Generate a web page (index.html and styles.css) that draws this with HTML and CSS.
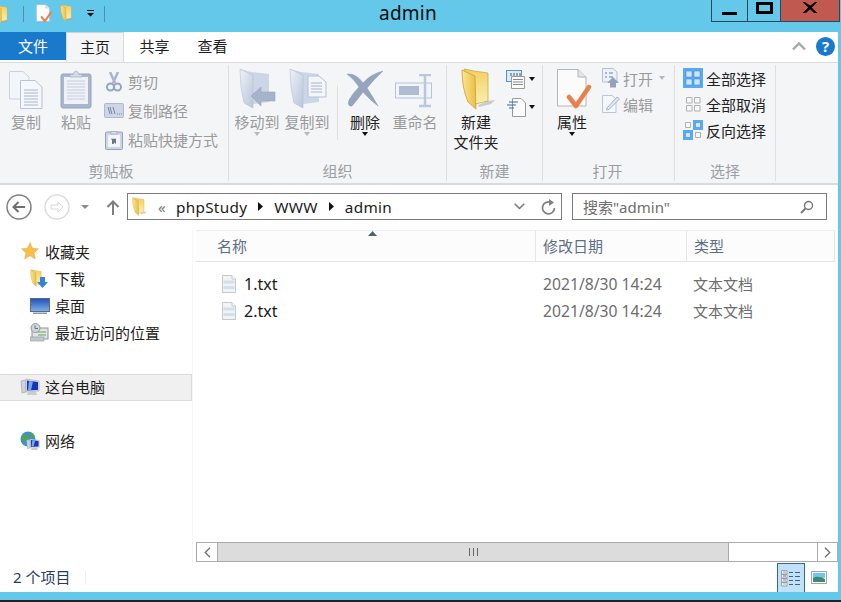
FILE: index.html
```html
<!DOCTYPE html>
<html lang="zh">
<head>
<meta charset="utf-8">
<title>admin</title>
<link rel="stylesheet" href="styles.css">
</head>
<body>
<svg class="defs" width="0" height="0">
  <defs>
    <linearGradient id="gFolder" x1="0" y1="0" x2="1" y2="0">
      <stop offset="0" stop-color="#fbe68f"/><stop offset="1" stop-color="#e9bf45"/>
    </linearGradient>
    <linearGradient id="gBack" x1="0" y1="0" x2="0" y2="1">
      <stop offset="0" stop-color="#f2cf61"/><stop offset="1" stop-color="#fbeeb0"/>
    </linearGradient>
    <linearGradient id="gPale" x1="0" y1="0" x2="1" y2="1">
      <stop offset="0" stop-color="#eef1f7"/><stop offset="1" stop-color="#b9c5da"/>
    </linearGradient>
    <linearGradient id="gScreen" x1="0" y1="0" x2="0" y2="1">
      <stop offset="0" stop-color="#1f52b8"/><stop offset="1" stop-color="#7fb0ea"/>
    </linearGradient>
    <symbol id="folder" viewBox="0 0 36 44">
      <path d="M3 1 L13 3 L27 5 L27 33 L14 36 Z" fill="url(#gBack)" stroke="#d0a93d" stroke-width=".8"/>
      <path d="M1 2 L14 8 L15 41 L7 34 Q1 20 1 2Z" fill="url(#gFolder)" stroke="#c79f34" stroke-width=".8"/>
      <path d="M17 37 L27 33 L34 32 L30 36 L18 39Z" fill="#a8a8a8" opacity=".55"/>
    </symbol>
    <symbol id="paleFolder" viewBox="0 0 40 44">
      <path d="M3 1 L14 4 L32 6 L32 34 L16 36Z" fill="#cdd6e6"/>
      <path d="M3 1 L16 7 L16 40 L7 35 Q3 20 3 1Z" fill="url(#gPale)" stroke="#b5c0d4" stroke-width=".6"/>
    </symbol>
    <symbol id="txt" viewBox="0 0 14 18">
      <path d="M.5.5H10L13.5 4V17.5H.5Z" fill="#f1f3f5" stroke="#c6c9cc"/>
      <path d="M1.5 5.5H12.5V8.5H1.5ZM1.5 11H12.5V14H1.5Z" fill="#d5dfe8"/>
      <path d="M10 .5V4H13.5" fill="#fff" stroke="#c6c9cc"/>
    </symbol>
    <symbol id="pc" viewBox="0 0 20 18">
      <path d="M1 3 L6 2 L6 14 L2 15Z" fill="#cfd3d8" stroke="#9aa0a6" stroke-width=".6"/>
      <path d="M6 1 L19 3 L19 13 L6 14Z" fill="#dfe3e8" stroke="#a5a9ad" stroke-width=".6"/>
      <path d="M7 2.5 L18 4 L18 12 L7 12.5Z" fill="#1536b8"/>
      <path d="M9 3 L13 3.4 L11 12 L8 12Z" fill="#7ba4ee"/>
      <path d="M8 14 L16 14 L17 17 L7 17Z" fill="#c8ccd0"/>
    </symbol>
    <symbol id="check" viewBox="0 0 36 44">
      <path d="M1.500 1.500H22L30 9V38H1.500Z" fill="#fbfbfb" stroke="#b4b4b4"/>
      <path d="M22 1.500V9H30" fill="#e6e6e6" stroke="#b4b4b4"/>
      <path d="M13 29 L20 38 L33 19" fill="none" stroke="#ea7f49" stroke-width="4.500" stroke-linecap="round" stroke-linejoin="round"/>
    </symbol>
  </defs>
</svg>

<div class="window">
  <header class="titlebar">
    <div class="qat">
      <svg class="qat-folder" width="14" height="18"><use href="#folder" x="-8" width="22" height="20"/></svg>
      <span class="qat-sep"></span>
      <svg width="18" height="20"><use href="#check"/></svg>
      <svg width="15" height="19"><use href="#folder"/></svg>
      <svg class="qat-drop" width="7" height="7" viewBox="0 0 7 7"><path d="M0 0H7V1H0ZM0 3H7L3.500 6.500Z" fill="#111"/></svg>
      <span class="qat-sep"></span>
    </div>
    <div class="title">admin</div>
    <div class="controls">
      <div class="ctl ctl-min"><span class="min-bar"></span></div>
      <div class="ctl ctl-max"><span class="max-box"></span></div>
      <div class="ctl ctl-close">
        <svg width="14" height="11" viewBox="0 0 14 11"><path d="M1.500 0L7 4 12.500 0H14L8.500 5.500 14 11H11.500L7 7 2.500 11H0L5.500 5.500 0 0Z" fill="#000" stroke="#000" stroke-width=".6"/></svg>
      </div>
    </div>
  </header>

  <main class="content">
    <nav class="tabs">
      <div class="tab tab-file">文件</div>
      <div class="tab tab-active">主页</div>
      <div class="tab tab-share">共享</div>
      <div class="tab tab-view">查看</div>
      <div class="tabs-right">
        <svg width="14" height="10" viewBox="0 0 14 10"><path d="M1 8.500L7 2.500 13 8.500" fill="none" stroke="#a8a8a8" stroke-width="2.400"/></svg>
        <div class="help">?</div>
      </div>
    </nav>

    <section class="ribbon">
      <div class="group g-clip">
        <div class="group-body">
          <div class="big b-copy">
            <svg class="big-icon" width="34" height="38" viewBox="0 0 34 38">
              <path d="M.5.5H14L20 6V28H.5Z" fill="#f2f5fa" stroke="#c9d3e2"/>
              <path d="M11.500 9.500H26L33 16V37.500H11.500Z" fill="#f4f7fb" stroke="#b6c3d8"/>
              <path d="M15 19H29M15 22H29M15 25H29M15 28H29M15 31H29M15 34H29" stroke="#aab6ca"/>
            </svg>
            <span class="lbl">复制</span>
          </div>
          <div class="big b-paste">
            <svg class="big-icon" width="32" height="38" viewBox="0 0 32 38">
              <rect x="1" y="3" width="30" height="34" rx="2" fill="#aab6cd" stroke="#98a5bd"/>
              <rect x="4" y="6" width="24" height="27" fill="#eef1f6"/>
              <path d="M7 10H25M7 13H25M7 16H25M7 19H25M7 22H25M7 25H25M7 28H25" stroke="#c5cedc"/>
              <path d="M10 6V3.500H13Q14 0 16 0 18 0 19 3.500H22V6Z" fill="#d4d9e2" stroke="#a5afc2" stroke-width=".7"/>
            </svg>
            <span class="lbl">粘贴</span>
          </div>
          <div class="small-col col-clip">
            <div class="small">
              <svg width="20" height="20" viewBox="0 0 20 20"><path d="M6 0 L11 11M14 0 L9 11" stroke="#a7b5cb" stroke-width="2.500" fill="none"/><circle cx="6.500" cy="15" r="3.500" fill="none" stroke="#93a5c0" stroke-width="2"/><circle cx="13.500" cy="15" r="3.500" fill="none" stroke="#93a5c0" stroke-width="2"/></svg>
              <span>剪切</span>
            </div>
            <div class="small">
              <svg width="20" height="16" viewBox="0 0 20 16"><rect x=".5" y=".5" width="19" height="14" rx="1" fill="#cdd6e7" stroke="#adb9cf"/><path d="M4 4L6 11M6 4L8 11M9 4L11 11" stroke="#76849c"/><path d="M13 11H14M15 11H16M17 11H18" stroke="#76849c"/></svg>
              <span>复制路径</span>
            </div>
            <div class="small">
              <svg width="18" height="20" viewBox="0 0 18 20"><rect x=".5" y="2" width="17" height="17.500" rx="1" fill="#ccd5e5" stroke="#94a3bd"/><rect x="3" y="5" width="12" height="12" fill="#f3f5f9"/><path d="M6 1.500H12V4H6Z" fill="#dbe0e8" stroke="#94a3bd" stroke-width=".6"/><path d="M7 14V10L5.800 8.800H11V14L9.500 12.500 8.500 14Z" fill="#69758a"/></svg>
              <span>粘贴快捷方式</span>
            </div>
          </div>
        </div>
        <div class="group-label">剪贴板</div>
      </div>

      <div class="group g-org">
        <div class="group-body">
          <div class="big b-move">
            <svg class="big-icon" width="40" height="44" viewBox="0 0 40 44"><use href="#paleFolder" width="40" height="44"/><path d="M14 28 L24 19 V24 H38 V33 H24 V38Z" fill="#a7b3ca" stroke="#98a6bf" stroke-width=".6"/></svg>
            <span class="lbl">移动到</span><span class="caret caret-pale"></span>
          </div>
          <div class="big b-copyto">
            <svg class="big-icon" width="40" height="44" viewBox="0 0 40 44"><use href="#paleFolder" width="40" height="44"/><path d="M21 8H32L39 14V29H21Z" fill="#f2f5fa" stroke="#b6c3d8"/><path d="M24 15H35M24 18H35M24 21H35M24 24H35" stroke="#aab6ca"/></svg>
            <span class="lbl">复制到</span><span class="caret caret-pale"></span>
          </div>
          <span class="inner-sep"></span>
          <div class="big b-del">
            <svg class="big-icon" width="38" height="40" viewBox="0 0 38 40"><path d="M1 4 Q10 3 17 13 Q25 4 37 1 Q28 9 21 18 Q27 27 32 36 Q24 30 17 22 Q12 29 6 36 Q1 37 3 30 Q7 23 13 17 Q8 9 1 4Z" fill="#95a5bf" stroke="#8496b3" stroke-width=".5"/></svg>
            <span class="lbl lbl-dark">删除</span><span class="caret"></span>
          </div>
          <div class="big b-ren">
            <svg class="big-icon" width="40" height="34" viewBox="0 0 40 34"><rect x=".5" y="9" width="36" height="15" fill="#f2f5fa" stroke="#b7c3d8"/><rect x="4" y="12" width="20" height="9" fill="#aebbd2"/><path d="M24 1H36M24 32H36M30 1V32" stroke="#bac7da" stroke-width="2.500" fill="none"/></svg>
            <span class="lbl">重命名</span>
          </div>
        </div>
        <div class="group-label">组织</div>
      </div>

      <div class="group g-new">
        <div class="group-body">
          <div class="big b-newf">
            <svg class="big-icon" width="36" height="44"><use href="#folder" width="36" height="44"/></svg>
            <span class="lbl lbl-dark">新建</span>
            <span class="lbl lbl-dark">文件夹</span>
          </div>
          <div class="small-col col-newi">
            <div class="icon-drop">
              <svg width="20" height="19" viewBox="0 0 20 19"><rect x=".5" y=".5" width="15" height="11" fill="#dcecfb" stroke="#4f94dc"/><path d="M5.500 6.500H18.500V18.500H5.500Z" fill="#fbfbfb" stroke="#9a9a9a"/><path d="M7 9.500H17M7 12H17M7 14.500H17" stroke="#8a8a8a"/><path d="M5 3V6M8 3V6M11 3V6M14 3V6" stroke="#5a5a5a"/></svg>
              <span class="caret"></span>
            </div>
            <div class="icon-drop">
              <svg width="20" height="19" viewBox="0 0 20 19"><path d="M6.500 .5H15L19.500 5V18.500H6.500Z" fill="#fbfbfb" stroke="#9a9a9a"/><path d="M3 4H12M1 7H10M3 10H8" stroke="#2c66c8"/></svg>
              <span class="caret"></span>
            </div>
          </div>
        </div>
        <div class="group-label">新建</div>
      </div>

      <div class="group g-open">
        <div class="group-body">
          <div class="big b-prop">
            <svg class="big-icon" width="36" height="44"><use href="#check" width="36" height="44"/></svg>
            <span class="lbl lbl-dark">属性</span><span class="caret"></span>
          </div>
          <div class="small-col col-open">
            <div class="small">
              <svg width="18" height="20" viewBox="0 0 18 20"><path d="M.5.5H11L15 4V14H.5Z" fill="#eef2f8" stroke="#b4c0d4"/><path d="M3 4H5V6H3ZM3 8H5V10H3ZM7 4H11V6H7ZM7 8H11V10H7Z" fill="#a9b7cd"/><path d="M5 15 L11 9 L17 15 H14 V19.500 H8 V15Z" fill="#94a3bb"/></svg>
              <span>打开</span><span class="caret caret-pale caret-inline"></span>
            </div>
            <div class="small">
              <svg width="18" height="20" viewBox="0 0 18 20"><path d="M.5 1.500H10L14 5V18.500H.5Z" fill="#f4f7fb" stroke="#b9c6da"/><path d="M5 14 L15 3 L17.500 5 L7 15.500 L4.500 16Z" fill="#dfe6f0" stroke="#a5b4cb"/></svg>
              <span>编辑</span>
            </div>
          </div>
        </div>
        <div class="group-label">打开</div>
      </div>

      <div class="group g-sel">
        <div class="group-body">
          <div class="small-col col-sel">
            <div class="small small-on">
              <svg width="20" height="20" viewBox="0 0 20 20"><rect width="20" height="20" fill="#5aa9f5"/><path d="M3 3H9V9H3ZM11 3H17V9H11ZM3 11H9V17H3ZM11 11H17V17H11Z" fill="#cfe6fb" stroke="#2f80dc" stroke-width=".5"/></svg>
              <span>全部选择</span>
            </div>
            <div class="small small-on">
              <svg width="20" height="20" viewBox="0 0 20 20"><path d="M3.500 3.500H9V9H3.500ZM11.500 3.500H17V9H11.500ZM3.500 11.500H9V17H3.500ZM11.500 11.500H17V17H11.500Z" fill="#f8f8f8" stroke="#b0b0b0"/></svg>
              <span>全部取消</span>
            </div>
            <div class="small small-on">
              <svg width="20" height="20" viewBox="0 0 20 20"><rect x="10" width="10" height="10" fill="#5aa9f5"/><rect y="10" width="10" height="10" fill="#5aa9f5"/><path d="M12.500 2.500H17.500V7.500H12.500ZM2.500 12.500H7.500V17.500H2.500Z" fill="#cfe6fb" stroke="#2f80dc" stroke-width=".5"/><path d="M2.500 2.500H7.500V7.500H2.500ZM12.500 12.500H17.500V17.500H12.500Z" fill="#f8f8f8" stroke="#b0b0b0"/></svg>
              <span>反向选择</span>
            </div>
          </div>
        </div>
        <div class="group-label">选择</div>
      </div>
    </section>

    <section class="addr-row">
      <svg class="nav-back" width="26" height="26" viewBox="0 0 26 26"><circle cx="13" cy="13" r="12" fill="#fff" stroke="#808080" stroke-width="1.500"/><path d="M19 13H8M12.500 8L7.500 13 12.500 18" fill="none" stroke="#6f6f6f" stroke-width="2"/></svg>
      <svg class="nav-fwd" width="26" height="26" viewBox="0 0 26 26"><circle cx="13" cy="13" r="12" fill="#fff" stroke="#dcdcdc" stroke-width="1.500"/><path d="M7 11H14V8L19 13 14 18V15H7Z" fill="#fff" stroke="#d8d8d8"/></svg>
      <svg class="nav-drop" width="8" height="4" viewBox="0 0 8 4"><path d="M0 0H8L4 4Z" fill="#8c8c8c"/></svg>
      <svg class="nav-up" width="14" height="15" viewBox="0 0 14 15"><path d="M7 15V2M1.500 7L7 1.500 12.500 7" fill="none" stroke="#7d7d7d" stroke-width="2"/></svg>
      <div class="addr">
        <svg class="addr-folder" width="16" height="20"><use href="#folder" width="16" height="20"/></svg>
        <span class="crumb-more">«</span>
        <span class="crumb">phpStudy</span>
        <svg class="crumb-arrow" width="5" height="9" viewBox="0 0 5 9"><path d="M0 0L5 4.500 0 9Z" fill="#111"/></svg>
        <span class="crumb">WWW</span>
        <svg class="crumb-arrow" width="5" height="9" viewBox="0 0 5 9"><path d="M0 0L5 4.500 0 9Z" fill="#111"/></svg>
        <span class="crumb">admin</span>
        <span class="flex-fill"></span>
        <svg class="addr-chev" width="11" height="7" viewBox="0 0 11 7"><path d="M.7.7L5.500 5.500 10.300.7" fill="none" stroke="#777" stroke-width="1.500"/></svg>
        <svg class="addr-refresh" width="15" height="16" viewBox="0 0 15 16"><path d="M9.500 3.200A6 6 0 1 0 13.500 9" fill="none" stroke="#808080" stroke-width="1.700"/><path d="M8 0V7L13 3.500Z" fill="#808080"/></svg>
      </div>
      <div class="search">
        <span>搜索"admin"</span>
        <span class="flex-fill"></span>
        <svg width="14" height="14" viewBox="0 0 14 14"><circle cx="8.500" cy="5.500" r="4" fill="none" stroke="#777" stroke-width="1.400"/><path d="M5.500 8.500L1 13" stroke="#777" stroke-width="2"/></svg>
      </div>
    </section>

    <section class="main">
      <aside class="sidebar">
        <div class="nav-item nav-first">
          <svg width="18" height="18" viewBox="0 0 18 18"><path d="M9 .5L11.500 6.300 17.500 6.800 13 11 14.400 17 9 13.800 3.600 17 5 11 .5 6.800 6.500 6.300Z" fill="#f9bd4a" stroke="#e8a63a" stroke-width=".5"/></svg>
          <span>收藏夹</span>
        </div>
        <div class="nav-item nav-sub">
          <svg width="18" height="19"><use href="#folder" width="15" height="19"/><path d="M10 8H15V13H18L12.500 19 7 13H10Z" fill="#2e86d6"/></svg>
          <span>下载</span>
        </div>
        <div class="nav-item nav-sub">
          <svg width="20" height="16" viewBox="0 0 20 16"><rect x=".5" y=".5" width="19" height="13" fill="url(#gScreen)" stroke="#5c6b80"/><path d="M3 14.500H17V16H3Z" fill="#8b98a8"/></svg>
          <span>桌面</span>
        </div>
        <div class="nav-item nav-sub">
          <svg width="20" height="19" viewBox="0 0 20 19"><rect x="2" y="5" width="16" height="11" fill="#dfe4e8" stroke="#8f979e"/><circle cx="5.500" cy="5" r="4.500" fill="#cfd7dd" stroke="#8f979e"/><path d="M5 2.500V5.500H8" stroke="#6b757d" fill="none"/><path d="M8 9H16M8 12H16" stroke="#73a34f"/><rect y="14" width="14" height="4" fill="#bfc7cd" stroke="#8f979e" stroke-width=".6"/></svg>
          <span>最近访问的位置</span>
        </div>
        <div class="nav-item nav-pc">
          <svg width="20" height="18"><use href="#pc" width="20" height="18"/></svg>
          <span>这台电脑</span>
        </div>
        <div class="nav-item nav-net">
          <svg width="20" height="20" viewBox="0 0 20 20"><circle cx="8" cy="8" r="7.500" fill="#3d8fd0"/><path d="M2 5Q6 2 8 5T5 11Q1 10 2 5ZM10 1Q15 3 14 7L10 6Z" fill="#4fa64a"/><use href="#pc" x="6" y="7" width="14" height="13"/></svg>
          <span>网络</span>
        </div>
      </aside>

      <div class="list">
        <div class="list-head">
          <div class="col col-name">名称
            <svg class="sort" width="9" height="5" viewBox="0 0 9 5"><path d="M4.500 0L9 5H0Z" fill="#4f6378"/></svg>
          </div>
          <div class="col col-date">修改日期</div>
          <div class="col col-type">类型</div>
        </div>
        <div class="rows">
          <div class="row">
            <div class="cell-name"><svg width="14" height="18"><use href="#txt" width="14" height="18"/></svg><span>1.txt</span></div>
            <div class="cell-date">2021/8/30 14:24</div>
            <div class="cell-type">文本文档</div>
          </div>
          <div class="row">
            <div class="cell-name"><svg width="14" height="18"><use href="#txt" width="14" height="18"/></svg><span>2.txt</span></div>
            <div class="cell-date">2021/8/30 14:24</div>
            <div class="cell-type">文本文档</div>
          </div>
        </div>
        <div class="hscroll">
          <div class="sb-btn"><svg width="7" height="11" viewBox="0 0 7 11"><path d="M6 .7L1.200 5.500 6 10.300" fill="none" stroke="#6f6f6f" stroke-width="1.300"/></svg></div>
          <div class="sb-thumb"><span class="grip"></span></div>
          <div class="sb-track"></div>
          <div class="sb-btn sb-right"><svg width="7" height="11" viewBox="0 0 7 11"><path d="M1 .7L5.800 5.500 1 10.300" fill="none" stroke="#6f6f6f" stroke-width="1.300"/></svg></div>
        </div>
      </div>
    </section>

    <footer class="status">
      <span class="count">2 个项目</span>
      <span class="status-sep"></span>
      <span class="flex-fill"></span>
      <div class="view view-on">
        <svg width="20" height="17" viewBox="0 0 20 17"><path d="M.5.500H6V4H.5ZM.5 4.500H6V8H.5ZM.5 8.500H6V12H.5ZM.5 12.500H6V16H.5Z" fill="#f4f4f4" stroke="#7f8a96" stroke-width=".7"/><path d="M2 2H5" stroke="#8aa"/><path d="M2 6H5" stroke="#d24a3f"/><path d="M2 10H5" stroke="#6b8bd0"/><path d="M2 14H5" stroke="#c9b65a"/><path d="M8 2.500H12M14 2.500H19M8 6.500H12M14 6.500H19M8 10.500H12M14 10.500H19M8 14.500H12M14 14.500H19" stroke="#44607c"/></svg>
      </div>
      <div class="view view-thumb">
        <svg width="16" height="13" viewBox="0 0 16 13"><rect x=".5" y=".5" width="15" height="12" fill="#fff" stroke="#9aa7b5"/><rect x="2" y="2" width="12" height="5" fill="#6fc7ee"/><path d="M2 7Q7 4 14 8V11H2Z" fill="#3f8a6f"/></svg>
      </div>
    </footer>
  </main>
  <div class="bottom-edge"></div>
</div>
</body>
</html>
```
FILE: styles.css
```css
* { box-sizing: border-box; }
html, body { margin: 0; padding: 0; }
body {
  width: 841px;
  height: 602px;
  overflow: hidden;
  font-family: "Noto Sans", "Noto Sans CJK SC", sans-serif;
  font-size: 15px;
  color: #1e1e1e;
}
svg { display: block; flex: none; }
.defs { position: absolute; }
.flex-fill { flex: 1; }

.window {
  width: 841px;
  height: 602px;
  background: #63c8ea;
  display: flex;
  flex-direction: column;
}

/* title bar */
.titlebar { height: 32px; display: flex; flex: none; }
.qat { width: 379px; display: flex; align-items: center; height: 27px; }
.qat-folder { margin-right: 9px; }
.qat-sep { width: 1px; height: 16px; background: #4f8fa8; margin-right: 11px; }
.qat svg + svg { margin-left: 7px; }
.qat-drop { margin: 0 10px 0 12px !important; }
.title { font-size: 19px; line-height: 27px; color: #0a0a0a; width: 332px; letter-spacing: .25px; }
.controls { display: flex; height: 22px; }
.ctl { height: 22px; border: 1px solid #29495a; border-top: 0; display: flex; align-items: center; justify-content: center; margin-left: -1px; }
.ctl-min { width: 37px; margin-left: 0; }
.ctl-max { width: 34px; }
.ctl-close { width: 60px; background: #c0594f; }
.min-bar { width: 15px; height: 3px; background: #000; margin-top: 5px; }
.max-box { width: 17px; height: 12px; border: 3px solid #000; margin-top: -5px; }
.ctl-close svg { margin-top: -6px; }

/* content */
.content {
  width: 838px;
  height: 560px;
  flex: none;
  background: #fff;
  display: flex;
  flex-direction: column;
}
.tabs { height: 30px; display: flex; flex: none; }
.tab { line-height: 29px; text-align: center; }
.tab-file { width: 66px; height: 28px; background: #1979ca; color: #fff; }
.tab-active { width: 58px; height: 30px; background: #f4f5f7; border: 1px solid #d9dadb; border-top-color: #cfd3d6; border-bottom: 0; }
.tab-share { width: 59px; padding-left: 2px; }
.tab-view { width: 59px; }
.tabs-right { margin-left: auto; display: flex; align-items: center; height: 28px; }
.tabs-right svg { margin-right: 10px; }
.help {
  width: 19px; height: 19px; border-radius: 50%; background: #1979ca; color: #fff;
  font-weight: 700; font-size: 15px; line-height: 19px; text-align: center; margin-right: 3px;
}

/* ribbon */
.ribbon {
  height: 123px;
  flex: none;
  background: #f4f5f7;
  border-top: 1px solid #dadbdc;
  border-bottom: 2px solid #dadbdc;
  display: flex;
  color: #9a9a9a;
}
.group {
  display: flex;
  flex-direction: column;
  margin: 2px 0;
  border-right: 1px solid #dcdedf;
}
.g-clip { width: 229px; }
.g-org { width: 218px; }
.g-new { width: 96px; }
.g-open { width: 132px; }
.g-sel { width: 101px; }
.group-body { flex: 1; display: flex; align-items: flex-start; padding-top: 3px; min-height: 0; }
.group-label { height: 20px; line-height: 20px; text-align: center; color: #9b9fa3; }
.g-clip .group-label { padding-right: 6px; }
.g-open .group-label { padding-right: 2px; }

.big { display: flex; flex-direction: column; align-items: center; flex: none; }
.big-icon { height: 44px; }
.lbl { line-height: 20px; white-space: nowrap; color: #9a9a9a; }
.lbl-dark { color: #222; }
.caret { width: 0; height: 0; border: 3.500px solid transparent; border-top: 4px solid #111; border-bottom: 0; }
.caret-pale { border-top-color: #b8b8b8; }
.caret-inline { margin: 0 0 0 6px; }

.b-copy { width: 46px; margin-left: 3px; }
.b-paste { width: 50px; margin-left: 2px; }
.col-clip { margin: -1px 0 0 3px; }
.small-col { display: flex; flex-direction: column; }
.small { display: flex; align-items: center; height: 29px; white-space: nowrap; }
.small svg { margin-right: 3px; }
.col-clip .small svg { width: 20px; margin-right: 4px; }

.b-move { width: 50px; margin-left: 3px; }
.b-copyto { width: 50px; }
.inner-sep { width: 1px; height: 55px; background: #dfe1e3; margin: 17px 0 0 5px; }
.b-del { width: 50px; margin-left: 2px; }
.b-del .big-icon { height: 40px; margin: 2px 0; }
.b-ren { width: 50px; }
.b-ren .big-icon { height: 34px; margin: 6px 0 4px; }

.b-newf { width: 48px; margin-left: 5px; }
.b-newf .big-icon { margin-left: 6px; }
.col-newi { margin-left: 6px; gap: 8px; padding-top: 1px; }
.icon-drop { display: flex; align-items: center; gap: 3px; height: 20px; }

.b-prop { width: 44px; margin-left: 7px; }
.b-prop .big-icon { margin-left: 3px; }
.col-open { margin: -3px 0 0 8px; }
.col-open .small { height: 26px; }
.col-sel { margin: -3px 0 0 8px; }
.col-sel .small { height: 26px; }
.small-on { color: #222; }

/* address row */
.addr-row { height: 45px; flex: none; display: flex; align-items: flex-start; }
.nav-back { margin: 9px 0 0 6px; }
.nav-fwd { margin: 9px 0 0 12px; }
.nav-drop { margin: 20px 0 0 11px; }
.nav-up { margin: 15px 0 0 17px; }
.addr {
  width: 435px; height: 27px; margin: 8px 0 0 7px; border: 1px solid #7a7a7a;
  display: flex; align-items: center; color: #1a1a1a;
}
.addr-folder { margin-left: 4px; }
.crumb { font-size: 15.300px; letter-spacing: .3px; }
.crumb-more { margin-left: 10px; color: #777; width: 18px; }
.crumb-arrow { margin: 0 11px; }
.addr-chev { margin-right: 16px; }
.addr-refresh { margin-right: 5px; }
.search {
  width: 255px; height: 27px; margin: 8px 0 0 10px; border: 1px solid #7a7a7a;
  display: flex; align-items: center; padding: 0 12px 0 10px; color: #6d6d6d;
}

/* main */
.main { flex: 1; display: flex; min-height: 0; }
.sidebar { width: 193px; flex: none; padding-top: 7px; margin-right: 3px; border-right: 1px solid #f6f6f6; }
.nav-item { height: 27px; display: flex; align-items: center; padding-left: 20px; }
.nav-first { height: 28px; }
.nav-item svg { width: 20px; margin-right: 5px; }
.nav-sub { padding-left: 30px; }
.nav-pc { margin-top: 28px; padding-bottom: 2px; background: #f0f0f0; border: 1px solid #d9d9d9; border-left: 0; }
.nav-net { margin-top: 26px; }

.list { flex: 1; display: flex; flex-direction: column; min-width: 0; }
.list-head { height: 32px; flex: none; display: flex; border-top: 1px solid #eeeeee; border-bottom: 1px solid #e5e5e5; background: #fcfcfc; color: #5d6f82; margin-right: 3px; }
.col { line-height: 30px; border-right: 1px solid #e5e5e5; position: relative; }
.col-name { width: 340px; padding-left: 21px; }
.col-date { width: 151px; padding-left: 7px; }
.col-type { width: 148px; padding-left: 7px; }
.sort { position: absolute; left: 172px; top: 0; }

.rows { flex: 1; padding-top: 8px; }
.row { height: 27px; display: flex; align-items: center; }
.cell-name { width: 340px; padding-left: 26px; display: flex; align-items: center; gap: 8px; color: #1a1a1a; font-size: 16px; }
.cell-date { width: 150px; padding-left: 7px; color: #6d6d6d; font-size: 15.700px; white-space: nowrap; }
.cell-type { padding-left: 7px; color: #6d6d6d; }

.hscroll { height: 20px; flex: none; display: flex; border: 1px solid #ababab; border-right: 0; margin-bottom: 1px; }
.sb-btn { width: 20px; display: flex; align-items: center; justify-content: center; flex: none; }
.sb-thumb { width: 512px; background: #dcdcdc; border: 1px solid #ababab; border-width: 0 1px; display: flex; align-items: center; justify-content: center; flex: none; }
.grip { width: 9px; height: 8px; background: repeating-linear-gradient(90deg, #666 0 1px, transparent 1px 4px); }
.sb-track { flex: 1; }
.sb-right { border-left: 1px solid #ababab; border-right: 1px solid #ababab; width: 21px; }

/* status */
.status { height: 29px; flex: none; display: flex; align-items: center; }
.count { margin: -2px 0 0 13px; color: #1f3d66; width: 72px; white-space: nowrap; }
.status-sep { width: 1px; height: 13px; background: #ededed; }
.view { display: flex; align-items: center; justify-content: center; height: 29px; }
.view-on { width: 28px; background: #c0e1f7; border: 1px solid #33688f; border-bottom: 0; margin-right: 5px; }
.view-thumb { width: 17px; margin-right: 11px; }

.bottom-edge { height: 10px; flex: none; border-bottom: 2px solid #222; }
```
